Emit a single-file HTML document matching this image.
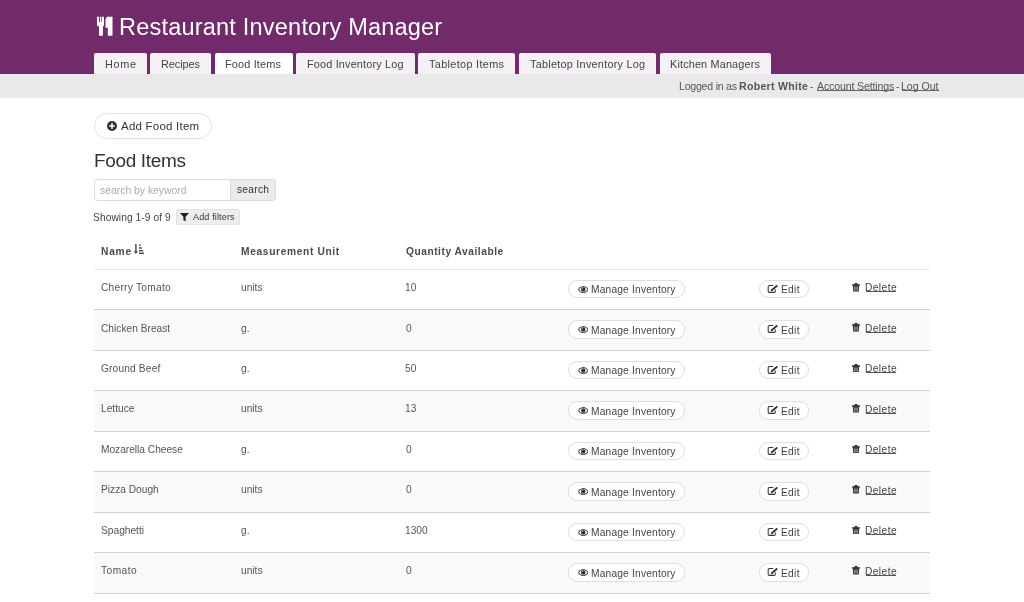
<!DOCTYPE html>
<html><head><meta charset="utf-8">
<style>
*{margin:0;padding:0;box-sizing:border-box}
html,body{width:1024px;height:602px;overflow:hidden;background:#fff;font-family:"Liberation Sans",sans-serif;color:#4a4a4a}
.a{position:absolute}
.t{position:absolute;line-height:1;white-space:nowrap;will-change:transform}
.tab{position:absolute;top:53px;height:20.5px;background:#f5f0f5;border-radius:2px 2px 0 0}
.tab.on{background:#fff}
.pill{position:absolute;border:1px solid #dedede;border-radius:10px;background:#fff}
.u{text-decoration:underline}
</style></head><body>
<div class="a" style="left:0;top:0;width:1024px;height:73.5px;background:#712b6a"></div>
<div class="a" style="left:0;top:73.5px;width:1024px;height:24.5px;background:#e9e9e9"></div>
<svg class="a" style="left:92px;top:12px" width="28" height="28" viewBox="0 0 28 28"><g fill="#fff">
<path d="M5 4.65H7V10H7.9V4.65H9.3V10H10V4.65H12V13.5L10.9 14.6V23Q10.9 23.7 10.2 23.7H7.7Q7 23.7 7 23V14.6L5 13.5Z"/>
<path d="M13.5 7.4L14.9 4.65H20.5V23Q20.5 23.7 19.8 23.7H16.5Q15.8 23.7 15.8 23V15.8H13.5Z"/></g></svg>
<div class="t" style="left:118.88px;top:16px;font-size:23.5px;color:#fff;letter-spacing:0.213px;">Restaurant Inventory Manager</div>
<div class="tab" style="left:94px;width:53px"></div>
<div class="t" style="left:104.70px;top:59px;font-size:10.9px;color:#444;letter-spacing:0.662px;">Home</div>
<div class="tab" style="left:150.2px;width:60.80000000000001px"></div>
<div class="t" style="left:160.95px;top:59px;font-size:10.9px;color:#444;letter-spacing:-0.073px;">Recipes</div>
<div class="tab on" style="left:215px;width:78px"></div>
<div class="t" style="left:225.08px;top:59px;font-size:10.9px;color:#444;letter-spacing:0.164px;">Food Items</div>
<div class="tab" style="left:296px;width:118.5px"></div>
<div class="t" style="left:307.20px;top:59px;font-size:10.9px;color:#444;letter-spacing:0.157px;">Food Inventory Log</div>
<div class="tab" style="left:418px;width:97px"></div>
<div class="t" style="left:429.19px;top:59px;font-size:10.9px;color:#444;letter-spacing:0.323px;">Tabletop Items</div>
<div class="tab" style="left:519px;width:136.5px"></div>
<div class="t" style="left:529.98px;top:59px;font-size:10.9px;color:#444;letter-spacing:0.237px;">Tabletop Inventory Log</div>
<div class="tab" style="left:659.5px;width:111.5px"></div>
<div class="t" style="left:669.76px;top:59px;font-size:10.9px;color:#444;letter-spacing:0.142px;">Kitchen Managers</div>
<div class="t" style="left:678.65px;top:81px;font-size:10.6px;color:#555;letter-spacing:-0.236px;">Logged in as</div>
<div class="t" style="left:738.99px;top:81px;font-size:10.6px;color:#555;letter-spacing:0.282px;font-weight:bold;">Robert White</div>
<div class="t" style="left:810.12px;top:81px;font-size:10.6px;color:#555;">-</div>
<div class="t" style="left:816.54px;top:81px;font-size:10.6px;color:#555;letter-spacing:-0.151px;">Account Settings</div>
<div class="a" style="left:817px;top:90.2px;width:76.6px;height:1px;background:#666"></div>
<div class="t" style="left:896.05px;top:81px;font-size:10.6px;color:#555;">-</div>
<div class="t" style="left:901.39px;top:81px;font-size:10.6px;color:#555;letter-spacing:-0.032px;">Log Out</div>
<div class="a" style="left:902.4px;top:90.2px;width:36.3px;height:1px;background:#666"></div>
<div class="a" style="left:94px;top:113px;width:118px;height:26px;border:1px solid #e6e0e3;border-radius:13px"></div>
<svg class="a" style="left:107px;top:120.8px" width="10" height="10" viewBox="0 0 10 10"><circle cx="5" cy="5" r="5" fill="#333"/><path d="M4.2 2.3h1.6v1.9h1.9v1.6H5.8v1.9H4.2V5.8H2.3V4.2h1.9z" fill="#fff"/></svg>
<div class="t" style="left:120.82px;top:121px;font-size:11.5px;color:#333;letter-spacing:0.229px;">Add Food Item</div>
<div class="t" style="left:93.52px;top:151px;font-size:19px;color:#333;letter-spacing:-0.343px;">Food Items</div>
<div class="a" style="left:94px;top:178.5px;width:182px;height:22px;border:1px solid #ddd;border-radius:3px"></div>
<div class="a" style="left:230px;top:178.5px;width:46px;height:22px;border:1px solid #ddd;border-radius:0 3px 3px 0;background:#ebebeb"></div>
<div class="t" style="left:99.83px;top:186px;font-size:10.4px;color:#aaa;letter-spacing:-0.005px;">search by keyword</div>
<div class="t" style="left:236.89px;top:185px;font-size:10.2px;color:#333;letter-spacing:0.272px;">search</div>
<div class="t" style="left:92.89px;top:213px;font-size:10.2px;color:#444;letter-spacing:0.087px;">Showing 1-9 of 9</div>
<div class="a" style="left:176px;top:208.8px;width:64px;height:15.8px;border:1px solid #e3e3e3;border-radius:2px;background:#ededed"></div>
<svg class="a" style="left:180.2px;top:213.1px" width="9" height="8.6" viewBox="0 0 9 8.6"><path d="M0 0h9L5.6 3.8V8.6L3.4 7V3.8z" fill="#222"/></svg>
<div class="t" style="left:193.12px;top:213px;font-size:9px;color:#333;letter-spacing:0.156px;">Add filters</div>
<div class="t" style="left:101.20px;top:247px;font-size:10.2px;color:#4a4a4a;letter-spacing:0.776px;font-weight:bold;">Name</div>
<svg class="a" style="left:133.8px;top:244.4px" width="10.4" height="10" viewBox="0 0 10.4 10"><g fill="#444">
<path d="M1.2 0h1.4v7.2h1.4L1.9 10 -0.2 7.2h1.4z"/><rect x="5" y="0.5" width="1.6" height="1.4"/><rect x="5" y="3.3" width="3" height="1.4"/><rect x="5" y="6" width="4.2" height="1.4"/><rect x="5" y="8.6" width="5.4" height="1.4"/></g></svg>
<div class="t" style="left:241.10px;top:247px;font-size:10.2px;color:#4a4a4a;letter-spacing:0.663px;font-weight:bold;">Measurement Unit</div>
<div class="t" style="left:405.65px;top:247px;font-size:10.2px;color:#4a4a4a;letter-spacing:0.535px;font-weight:bold;">Quantity Available</div>
<div class="a" style="left:94px;top:268.7px;width:836px;height:1px;background:#e4e4e4"></div>
<div class="a" style="left:94px;top:309.18px;width:836px;height:1px;background:#d0d0d0"></div>
<div class="t" style="left:101.03px;top:283px;font-size:10.2px;color:#555;letter-spacing:0.256px;">Cherry Tomato</div>
<div class="t" style="left:240.88px;top:283px;font-size:10.2px;color:#555;">units</div>
<div class="t" style="left:404.76px;top:283px;font-size:10.2px;color:#555;">10</div>
<div class="pill" style="left:568px;top:280.00px;width:116.5px;height:18.3px;border-radius:9px"></div>
<svg class="a" style="left:577.50px;top:285.70px" width="10.5" height="7.2" viewBox="0 0 10.5 7.2"><path d="M5.25 0C2.4 0 .6 2.3 0 3.6.6 4.9 2.4 7.2 5.25 7.2S9.9 4.9 10.5 3.6C9.9 2.3 8.1 0 5.25 0z" fill="#4a4a4a"/><path d="M5.25.95C3 .95 1.6 2.6 1.05 3.6 1.6 4.6 3 6.25 5.25 6.25S8.9 4.6 9.45 3.6C8.9 2.6 7.5.95 5.25.95z" fill="#fff"/><circle cx="5.25" cy="3.45" r="2.25" fill="#333"/><circle cx="4.4" cy="2.6" r=".6" fill="#777"/></svg>
<div class="t" style="left:591.12px;top:285px;font-size:10.2px;color:#444;letter-spacing:0.193px;">Manage Inventory</div>
<div class="pill" style="left:758.6px;top:280.00px;width:50px;height:18.3px;border-radius:9px"></div>
<svg class="a" style="left:766.50px;top:284.00px" width="11" height="9.5" viewBox="0 0 11 9.5"><path d="M6.2 1.5H2.4Q1.2 1.5 1.2 2.7V7.2Q1.2 8.35 2.4 8.35H7.1Q8.3 8.35 8.3 7.2V5.4" fill="none" stroke="#333" stroke-width="1.05"/><path d="M3.6 7.2L5.33 6.91 10.89 2.13 9.72.77 4.16 5.54z" fill="#333"/></svg>
<div class="t" style="left:781.33px;top:285px;font-size:10.2px;color:#444;letter-spacing:0.317px;">Edit</div>
<svg class="a" style="left:852.30px;top:283.00px" width="8" height="8.5" viewBox="0 0 8 8.5"><path d="M0 1.3h8v1.2H0zM2.6 0h2.8v1.4H2.6zM.8 2.5h6.4L6.8 8.5H1.2z" fill="#333"/><path d="M2.6 3.5v4M4 3.5v4M5.4 3.5v4" stroke="#fff" stroke-width=".5"/></svg>
<div class="t" style="left:865.22px;top:283px;font-size:10.2px;color:#444;letter-spacing:0.426px;">Delete</div>
<div class="a" style="left:866px;top:291.20px;width:30px;height:1px;background:#555"></div>
<div class="a" style="left:94px;top:310.18px;width:836px;height:40.48px;background:#f9f9f9"></div>
<div class="a" style="left:94px;top:349.65px;width:836px;height:1px;background:#d0d0d0"></div>
<div class="t" style="left:101.07px;top:324px;font-size:10.2px;color:#555;letter-spacing:0.009px;">Chicken Breast</div>
<div class="t" style="left:241.27px;top:324px;font-size:10.2px;color:#555;">g.</div>
<div class="t" style="left:405.53px;top:324px;font-size:10.2px;color:#555;">0</div>
<div class="pill" style="left:568px;top:320.48px;width:116.5px;height:18.3px;border-radius:9px"></div>
<svg class="a" style="left:577.50px;top:326.18px" width="10.5" height="7.2" viewBox="0 0 10.5 7.2"><path d="M5.25 0C2.4 0 .6 2.3 0 3.6.6 4.9 2.4 7.2 5.25 7.2S9.9 4.9 10.5 3.6C9.9 2.3 8.1 0 5.25 0z" fill="#4a4a4a"/><path d="M5.25.95C3 .95 1.6 2.6 1.05 3.6 1.6 4.6 3 6.25 5.25 6.25S8.9 4.6 9.45 3.6C8.9 2.6 7.5.95 5.25.95z" fill="#fff"/><circle cx="5.25" cy="3.45" r="2.25" fill="#333"/><circle cx="4.4" cy="2.6" r=".6" fill="#777"/></svg>
<div class="t" style="left:591.12px;top:326px;font-size:10.2px;color:#444;letter-spacing:0.193px;">Manage Inventory</div>
<div class="pill" style="left:758.6px;top:320.48px;width:50px;height:18.3px;border-radius:9px"></div>
<svg class="a" style="left:766.50px;top:324.48px" width="11" height="9.5" viewBox="0 0 11 9.5"><path d="M6.2 1.5H2.4Q1.2 1.5 1.2 2.7V7.2Q1.2 8.35 2.4 8.35H7.1Q8.3 8.35 8.3 7.2V5.4" fill="none" stroke="#333" stroke-width="1.05"/><path d="M3.6 7.2L5.33 6.91 10.89 2.13 9.72.77 4.16 5.54z" fill="#333"/></svg>
<div class="t" style="left:781.33px;top:326px;font-size:10.2px;color:#444;letter-spacing:0.317px;">Edit</div>
<svg class="a" style="left:852.30px;top:323.48px" width="8" height="8.5" viewBox="0 0 8 8.5"><path d="M0 1.3h8v1.2H0zM2.6 0h2.8v1.4H2.6zM.8 2.5h6.4L6.8 8.5H1.2z" fill="#333"/><path d="M2.6 3.5v4M4 3.5v4M5.4 3.5v4" stroke="#fff" stroke-width=".5"/></svg>
<div class="t" style="left:865.22px;top:324px;font-size:10.2px;color:#444;letter-spacing:0.426px;">Delete</div>
<div class="a" style="left:866px;top:331.68px;width:30px;height:1px;background:#555"></div>
<div class="a" style="left:94px;top:390.12px;width:836px;height:1px;background:#d0d0d0"></div>
<div class="t" style="left:100.79px;top:364px;font-size:10.2px;color:#555;letter-spacing:0.152px;">Ground Beef</div>
<div class="t" style="left:241.27px;top:364px;font-size:10.2px;color:#555;">g.</div>
<div class="t" style="left:405.25px;top:364px;font-size:10.2px;color:#555;">50</div>
<div class="pill" style="left:568px;top:360.95px;width:116.5px;height:18.3px;border-radius:9px"></div>
<svg class="a" style="left:577.50px;top:366.65px" width="10.5" height="7.2" viewBox="0 0 10.5 7.2"><path d="M5.25 0C2.4 0 .6 2.3 0 3.6.6 4.9 2.4 7.2 5.25 7.2S9.9 4.9 10.5 3.6C9.9 2.3 8.1 0 5.25 0z" fill="#4a4a4a"/><path d="M5.25.95C3 .95 1.6 2.6 1.05 3.6 1.6 4.6 3 6.25 5.25 6.25S8.9 4.6 9.45 3.6C8.9 2.6 7.5.95 5.25.95z" fill="#fff"/><circle cx="5.25" cy="3.45" r="2.25" fill="#333"/><circle cx="4.4" cy="2.6" r=".6" fill="#777"/></svg>
<div class="t" style="left:591.12px;top:366px;font-size:10.2px;color:#444;letter-spacing:0.193px;">Manage Inventory</div>
<div class="pill" style="left:758.6px;top:360.95px;width:50px;height:18.3px;border-radius:9px"></div>
<svg class="a" style="left:766.50px;top:364.95px" width="11" height="9.5" viewBox="0 0 11 9.5"><path d="M6.2 1.5H2.4Q1.2 1.5 1.2 2.7V7.2Q1.2 8.35 2.4 8.35H7.1Q8.3 8.35 8.3 7.2V5.4" fill="none" stroke="#333" stroke-width="1.05"/><path d="M3.6 7.2L5.33 6.91 10.89 2.13 9.72.77 4.16 5.54z" fill="#333"/></svg>
<div class="t" style="left:781.33px;top:366px;font-size:10.2px;color:#444;letter-spacing:0.317px;">Edit</div>
<svg class="a" style="left:852.30px;top:363.95px" width="8" height="8.5" viewBox="0 0 8 8.5"><path d="M0 1.3h8v1.2H0zM2.6 0h2.8v1.4H2.6zM.8 2.5h6.4L6.8 8.5H1.2z" fill="#333"/><path d="M2.6 3.5v4M4 3.5v4M5.4 3.5v4" stroke="#fff" stroke-width=".5"/></svg>
<div class="t" style="left:865.22px;top:364px;font-size:10.2px;color:#444;letter-spacing:0.426px;">Delete</div>
<div class="a" style="left:866px;top:372.15px;width:30px;height:1px;background:#555"></div>
<div class="a" style="left:94px;top:391.12px;width:836px;height:40.48px;background:#f9f9f9"></div>
<div class="a" style="left:94px;top:430.60px;width:836px;height:1px;background:#d0d0d0"></div>
<div class="t" style="left:101.01px;top:404px;font-size:10.2px;color:#555;">Lettuce</div>
<div class="t" style="left:240.88px;top:404px;font-size:10.2px;color:#555;">units</div>
<div class="t" style="left:404.76px;top:404px;font-size:10.2px;color:#555;">13</div>
<div class="pill" style="left:568px;top:401.43px;width:116.5px;height:18.3px;border-radius:9px"></div>
<svg class="a" style="left:577.50px;top:407.12px" width="10.5" height="7.2" viewBox="0 0 10.5 7.2"><path d="M5.25 0C2.4 0 .6 2.3 0 3.6.6 4.9 2.4 7.2 5.25 7.2S9.9 4.9 10.5 3.6C9.9 2.3 8.1 0 5.25 0z" fill="#4a4a4a"/><path d="M5.25.95C3 .95 1.6 2.6 1.05 3.6 1.6 4.6 3 6.25 5.25 6.25S8.9 4.6 9.45 3.6C8.9 2.6 7.5.95 5.25.95z" fill="#fff"/><circle cx="5.25" cy="3.45" r="2.25" fill="#333"/><circle cx="4.4" cy="2.6" r=".6" fill="#777"/></svg>
<div class="t" style="left:591.12px;top:407px;font-size:10.2px;color:#444;letter-spacing:0.193px;">Manage Inventory</div>
<div class="pill" style="left:758.6px;top:401.43px;width:50px;height:18.3px;border-radius:9px"></div>
<svg class="a" style="left:766.50px;top:405.43px" width="11" height="9.5" viewBox="0 0 11 9.5"><path d="M6.2 1.5H2.4Q1.2 1.5 1.2 2.7V7.2Q1.2 8.35 2.4 8.35H7.1Q8.3 8.35 8.3 7.2V5.4" fill="none" stroke="#333" stroke-width="1.05"/><path d="M3.6 7.2L5.33 6.91 10.89 2.13 9.72.77 4.16 5.54z" fill="#333"/></svg>
<div class="t" style="left:781.33px;top:407px;font-size:10.2px;color:#444;letter-spacing:0.317px;">Edit</div>
<svg class="a" style="left:852.30px;top:404.43px" width="8" height="8.5" viewBox="0 0 8 8.5"><path d="M0 1.3h8v1.2H0zM2.6 0h2.8v1.4H2.6zM.8 2.5h6.4L6.8 8.5H1.2z" fill="#333"/><path d="M2.6 3.5v4M4 3.5v4M5.4 3.5v4" stroke="#fff" stroke-width=".5"/></svg>
<div class="t" style="left:865.22px;top:405px;font-size:10.2px;color:#444;letter-spacing:0.426px;">Delete</div>
<div class="a" style="left:866px;top:412.62px;width:30px;height:1px;background:#555"></div>
<div class="a" style="left:94px;top:471.08px;width:836px;height:1px;background:#d0d0d0"></div>
<div class="t" style="left:100.97px;top:445px;font-size:10.2px;color:#555;letter-spacing:-0.019px;">Mozarella Cheese</div>
<div class="t" style="left:241.27px;top:445px;font-size:10.2px;color:#555;">g.</div>
<div class="t" style="left:405.53px;top:445px;font-size:10.2px;color:#555;">0</div>
<div class="pill" style="left:568px;top:441.90px;width:116.5px;height:18.3px;border-radius:9px"></div>
<svg class="a" style="left:577.50px;top:447.60px" width="10.5" height="7.2" viewBox="0 0 10.5 7.2"><path d="M5.25 0C2.4 0 .6 2.3 0 3.6.6 4.9 2.4 7.2 5.25 7.2S9.9 4.9 10.5 3.6C9.9 2.3 8.1 0 5.25 0z" fill="#4a4a4a"/><path d="M5.25.95C3 .95 1.6 2.6 1.05 3.6 1.6 4.6 3 6.25 5.25 6.25S8.9 4.6 9.45 3.6C8.9 2.6 7.5.95 5.25.95z" fill="#fff"/><circle cx="5.25" cy="3.45" r="2.25" fill="#333"/><circle cx="4.4" cy="2.6" r=".6" fill="#777"/></svg>
<div class="t" style="left:591.12px;top:447px;font-size:10.2px;color:#444;letter-spacing:0.193px;">Manage Inventory</div>
<div class="pill" style="left:758.6px;top:441.90px;width:50px;height:18.3px;border-radius:9px"></div>
<svg class="a" style="left:766.50px;top:445.90px" width="11" height="9.5" viewBox="0 0 11 9.5"><path d="M6.2 1.5H2.4Q1.2 1.5 1.2 2.7V7.2Q1.2 8.35 2.4 8.35H7.1Q8.3 8.35 8.3 7.2V5.4" fill="none" stroke="#333" stroke-width="1.05"/><path d="M3.6 7.2L5.33 6.91 10.89 2.13 9.72.77 4.16 5.54z" fill="#333"/></svg>
<div class="t" style="left:781.33px;top:447px;font-size:10.2px;color:#444;letter-spacing:0.317px;">Edit</div>
<svg class="a" style="left:852.30px;top:444.90px" width="8" height="8.5" viewBox="0 0 8 8.5"><path d="M0 1.3h8v1.2H0zM2.6 0h2.8v1.4H2.6zM.8 2.5h6.4L6.8 8.5H1.2z" fill="#333"/><path d="M2.6 3.5v4M4 3.5v4M5.4 3.5v4" stroke="#fff" stroke-width=".5"/></svg>
<div class="t" style="left:865.22px;top:445px;font-size:10.2px;color:#444;letter-spacing:0.426px;">Delete</div>
<div class="a" style="left:866px;top:453.10px;width:30px;height:1px;background:#555"></div>
<div class="a" style="left:94px;top:472.07px;width:836px;height:40.48px;background:#f9f9f9"></div>
<div class="a" style="left:94px;top:511.55px;width:836px;height:1px;background:#d0d0d0"></div>
<div class="t" style="left:100.62px;top:485px;font-size:10.2px;color:#555;">Pizza Dough</div>
<div class="t" style="left:240.88px;top:485px;font-size:10.2px;color:#555;">units</div>
<div class="t" style="left:405.53px;top:485px;font-size:10.2px;color:#555;">0</div>
<div class="pill" style="left:568px;top:482.38px;width:116.5px;height:18.3px;border-radius:9px"></div>
<svg class="a" style="left:577.50px;top:488.07px" width="10.5" height="7.2" viewBox="0 0 10.5 7.2"><path d="M5.25 0C2.4 0 .6 2.3 0 3.6.6 4.9 2.4 7.2 5.25 7.2S9.9 4.9 10.5 3.6C9.9 2.3 8.1 0 5.25 0z" fill="#4a4a4a"/><path d="M5.25.95C3 .95 1.6 2.6 1.05 3.6 1.6 4.6 3 6.25 5.25 6.25S8.9 4.6 9.45 3.6C8.9 2.6 7.5.95 5.25.95z" fill="#fff"/><circle cx="5.25" cy="3.45" r="2.25" fill="#333"/><circle cx="4.4" cy="2.6" r=".6" fill="#777"/></svg>
<div class="t" style="left:591.12px;top:488px;font-size:10.2px;color:#444;letter-spacing:0.193px;">Manage Inventory</div>
<div class="pill" style="left:758.6px;top:482.38px;width:50px;height:18.3px;border-radius:9px"></div>
<svg class="a" style="left:766.50px;top:486.38px" width="11" height="9.5" viewBox="0 0 11 9.5"><path d="M6.2 1.5H2.4Q1.2 1.5 1.2 2.7V7.2Q1.2 8.35 2.4 8.35H7.1Q8.3 8.35 8.3 7.2V5.4" fill="none" stroke="#333" stroke-width="1.05"/><path d="M3.6 7.2L5.33 6.91 10.89 2.13 9.72.77 4.16 5.54z" fill="#333"/></svg>
<div class="t" style="left:781.33px;top:488px;font-size:10.2px;color:#444;letter-spacing:0.317px;">Edit</div>
<svg class="a" style="left:852.30px;top:485.38px" width="8" height="8.5" viewBox="0 0 8 8.5"><path d="M0 1.3h8v1.2H0zM2.6 0h2.8v1.4H2.6zM.8 2.5h6.4L6.8 8.5H1.2z" fill="#333"/><path d="M2.6 3.5v4M4 3.5v4M5.4 3.5v4" stroke="#fff" stroke-width=".5"/></svg>
<div class="t" style="left:865.22px;top:486px;font-size:10.2px;color:#444;letter-spacing:0.426px;">Delete</div>
<div class="a" style="left:866px;top:493.57px;width:30px;height:1px;background:#555"></div>
<div class="a" style="left:94px;top:552.02px;width:836px;height:1px;background:#d0d0d0"></div>
<div class="t" style="left:101.00px;top:526px;font-size:10.2px;color:#555;">Spaghetti</div>
<div class="t" style="left:241.27px;top:526px;font-size:10.2px;color:#555;">g.</div>
<div class="t" style="left:404.76px;top:526px;font-size:10.2px;color:#555;">1300</div>
<div class="pill" style="left:568px;top:522.85px;width:116.5px;height:18.3px;border-radius:9px"></div>
<svg class="a" style="left:577.50px;top:528.55px" width="10.5" height="7.2" viewBox="0 0 10.5 7.2"><path d="M5.25 0C2.4 0 .6 2.3 0 3.6.6 4.9 2.4 7.2 5.25 7.2S9.9 4.9 10.5 3.6C9.9 2.3 8.1 0 5.25 0z" fill="#4a4a4a"/><path d="M5.25.95C3 .95 1.6 2.6 1.05 3.6 1.6 4.6 3 6.25 5.25 6.25S8.9 4.6 9.45 3.6C8.9 2.6 7.5.95 5.25.95z" fill="#fff"/><circle cx="5.25" cy="3.45" r="2.25" fill="#333"/><circle cx="4.4" cy="2.6" r=".6" fill="#777"/></svg>
<div class="t" style="left:591.12px;top:528px;font-size:10.2px;color:#444;letter-spacing:0.193px;">Manage Inventory</div>
<div class="pill" style="left:758.6px;top:522.85px;width:50px;height:18.3px;border-radius:9px"></div>
<svg class="a" style="left:766.50px;top:526.85px" width="11" height="9.5" viewBox="0 0 11 9.5"><path d="M6.2 1.5H2.4Q1.2 1.5 1.2 2.7V7.2Q1.2 8.35 2.4 8.35H7.1Q8.3 8.35 8.3 7.2V5.4" fill="none" stroke="#333" stroke-width="1.05"/><path d="M3.6 7.2L5.33 6.91 10.89 2.13 9.72.77 4.16 5.54z" fill="#333"/></svg>
<div class="t" style="left:781.33px;top:528px;font-size:10.2px;color:#444;letter-spacing:0.317px;">Edit</div>
<svg class="a" style="left:852.30px;top:525.85px" width="8" height="8.5" viewBox="0 0 8 8.5"><path d="M0 1.3h8v1.2H0zM2.6 0h2.8v1.4H2.6zM.8 2.5h6.4L6.8 8.5H1.2z" fill="#333"/><path d="M2.6 3.5v4M4 3.5v4M5.4 3.5v4" stroke="#fff" stroke-width=".5"/></svg>
<div class="t" style="left:865.22px;top:526px;font-size:10.2px;color:#444;letter-spacing:0.426px;">Delete</div>
<div class="a" style="left:866px;top:534.05px;width:30px;height:1px;background:#555"></div>
<div class="a" style="left:94px;top:553.02px;width:836px;height:40.48px;background:#f9f9f9"></div>
<div class="a" style="left:94px;top:592.50px;width:836px;height:1px;background:#d0d0d0"></div>
<div class="t" style="left:101.25px;top:566px;font-size:10.2px;color:#555;letter-spacing:0.445px;">Tomato</div>
<div class="t" style="left:240.88px;top:566px;font-size:10.2px;color:#555;">units</div>
<div class="t" style="left:405.53px;top:566px;font-size:10.2px;color:#555;">0</div>
<div class="pill" style="left:568px;top:563.33px;width:116.5px;height:18.3px;border-radius:9px"></div>
<svg class="a" style="left:577.50px;top:569.03px" width="10.5" height="7.2" viewBox="0 0 10.5 7.2"><path d="M5.25 0C2.4 0 .6 2.3 0 3.6.6 4.9 2.4 7.2 5.25 7.2S9.9 4.9 10.5 3.6C9.9 2.3 8.1 0 5.25 0z" fill="#4a4a4a"/><path d="M5.25.95C3 .95 1.6 2.6 1.05 3.6 1.6 4.6 3 6.25 5.25 6.25S8.9 4.6 9.45 3.6C8.9 2.6 7.5.95 5.25.95z" fill="#fff"/><circle cx="5.25" cy="3.45" r="2.25" fill="#333"/><circle cx="4.4" cy="2.6" r=".6" fill="#777"/></svg>
<div class="t" style="left:591.12px;top:569px;font-size:10.2px;color:#444;letter-spacing:0.193px;">Manage Inventory</div>
<div class="pill" style="left:758.6px;top:563.33px;width:50px;height:18.3px;border-radius:9px"></div>
<svg class="a" style="left:766.50px;top:567.33px" width="11" height="9.5" viewBox="0 0 11 9.5"><path d="M6.2 1.5H2.4Q1.2 1.5 1.2 2.7V7.2Q1.2 8.35 2.4 8.35H7.1Q8.3 8.35 8.3 7.2V5.4" fill="none" stroke="#333" stroke-width="1.05"/><path d="M3.6 7.2L5.33 6.91 10.89 2.13 9.72.77 4.16 5.54z" fill="#333"/></svg>
<div class="t" style="left:781.33px;top:569px;font-size:10.2px;color:#444;letter-spacing:0.317px;">Edit</div>
<svg class="a" style="left:852.30px;top:566.33px" width="8" height="8.5" viewBox="0 0 8 8.5"><path d="M0 1.3h8v1.2H0zM2.6 0h2.8v1.4H2.6zM.8 2.5h6.4L6.8 8.5H1.2z" fill="#333"/><path d="M2.6 3.5v4M4 3.5v4M5.4 3.5v4" stroke="#fff" stroke-width=".5"/></svg>
<div class="t" style="left:865.22px;top:567px;font-size:10.2px;color:#444;letter-spacing:0.426px;">Delete</div>
<div class="a" style="left:866px;top:574.53px;width:30px;height:1px;background:#555"></div>
<div class="a" style="left:94px;top:632.98px;width:836px;height:1px;background:#d0d0d0"></div>
<div class="t" style="left:101.09px;top:607px;font-size:10.2px;color:#555;">Zucchini</div>
<div class="t" style="left:240.88px;top:607px;font-size:10.2px;color:#555;">units</div>
<div class="t" style="left:405.20px;top:607px;font-size:10.2px;color:#555;">20</div>
<div class="pill" style="left:568px;top:603.80px;width:116.5px;height:18.3px;border-radius:9px"></div>
<svg class="a" style="left:577.50px;top:609.50px" width="10.5" height="7.2" viewBox="0 0 10.5 7.2"><path d="M5.25 0C2.4 0 .6 2.3 0 3.6.6 4.9 2.4 7.2 5.25 7.2S9.9 4.9 10.5 3.6C9.9 2.3 8.1 0 5.25 0z" fill="#4a4a4a"/><path d="M5.25.95C3 .95 1.6 2.6 1.05 3.6 1.6 4.6 3 6.25 5.25 6.25S8.9 4.6 9.45 3.6C8.9 2.6 7.5.95 5.25.95z" fill="#fff"/><circle cx="5.25" cy="3.45" r="2.25" fill="#333"/><circle cx="4.4" cy="2.6" r=".6" fill="#777"/></svg>
<div class="t" style="left:591.12px;top:609px;font-size:10.2px;color:#444;letter-spacing:0.193px;">Manage Inventory</div>
<div class="pill" style="left:758.6px;top:603.80px;width:50px;height:18.3px;border-radius:9px"></div>
<svg class="a" style="left:766.50px;top:607.80px" width="11" height="9.5" viewBox="0 0 11 9.5"><path d="M6.2 1.5H2.4Q1.2 1.5 1.2 2.7V7.2Q1.2 8.35 2.4 8.35H7.1Q8.3 8.35 8.3 7.2V5.4" fill="none" stroke="#333" stroke-width="1.05"/><path d="M3.6 7.2L5.33 6.91 10.89 2.13 9.72.77 4.16 5.54z" fill="#333"/></svg>
<div class="t" style="left:781.33px;top:609px;font-size:10.2px;color:#444;letter-spacing:0.317px;">Edit</div>
<svg class="a" style="left:852.30px;top:606.80px" width="8" height="8.5" viewBox="0 0 8 8.5"><path d="M0 1.3h8v1.2H0zM2.6 0h2.8v1.4H2.6zM.8 2.5h6.4L6.8 8.5H1.2z" fill="#333"/><path d="M2.6 3.5v4M4 3.5v4M5.4 3.5v4" stroke="#fff" stroke-width=".5"/></svg>
<div class="t" style="left:865.22px;top:607px;font-size:10.2px;color:#444;letter-spacing:0.426px;">Delete</div>
<div class="a" style="left:866px;top:615.00px;width:30px;height:1px;background:#555"></div>
</body></html>
